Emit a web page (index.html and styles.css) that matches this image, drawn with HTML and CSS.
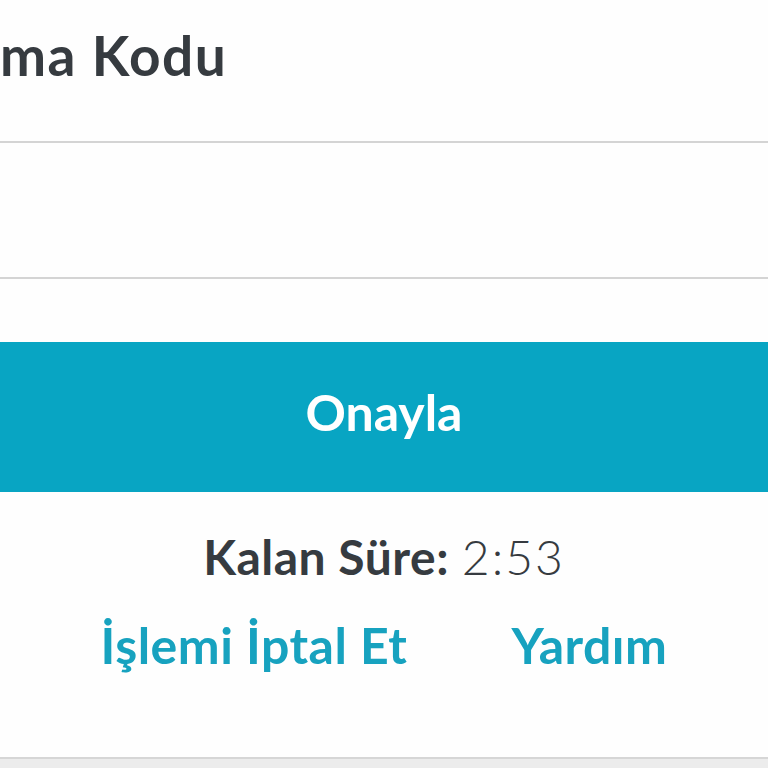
FILE: index.html
```html
<!DOCTYPE html>
<html>
<head>
  <title>Doğrulama Kodu</title>
  <link rel="stylesheet" href="styles.css">
</head>
<body>
  <div class="verify-container">
    <div class="verify-header">
      <h1 class="verify-title">ma Kodu</h1>
    </div>
    <form class="verify-form">
      <input type="text" id="code" class="verify-input" autocomplete="off">
      <button type="button" class="verify-button">Onayla</button>
    </form>
    <div class="timer">
      <span class="timer-label">Kalan Süre:</span> <span class="timer-value">2:53</span>
    </div>
    <div class="links">
      <a href="#" class="link">İşlemi İptal Et</a>
      <a href="#" class="link">Yardım</a>
    </div>
  </div>
  <div class="footer"></div>
</body>
</html>
```

FILE: styles.css
```css
/* CSS styles */
body {
  font-family: Lato, "Open Sans", sans-serif;
  background-color: #FEFEFE;
  color: #363B40;
  margin: 0;
  padding: 0;
  overflow: hidden;
}

.verify-container {
  height: 757px;
  border-bottom: 2px solid #D6D6D6;
}

.verify-header {
  height: 141px;
  border-bottom: 2px solid #D4D4D4;
  overflow: hidden;
}

.verify-title {
  margin: 0;
  padding-top: 22px;
  font-size: 55px;
  font-weight: 700;
  line-height: 66px;
  letter-spacing: 1.5px;
  white-space: nowrap;
}

.verify-form {
  margin: 0;
}

.verify-input {
  display: block;
  width: 100%;
  height: 136px;
  border: none;
  border-bottom: 2px solid #D4D4D4;
  background-color: #FEFEFE;
  box-sizing: border-box;
  outline: none;
}

.verify-button {
  display: block;
  width: 100%;
  height: 150px;
  margin-top: 63px;
  padding-bottom: 12px;
  border: none;
  background-color: #08A5C3;
  color: #FFF;
  font-family: Lato, "Open Sans", sans-serif;
  font-size: 50px;
  font-weight: 700;
  cursor: pointer;
}

.timer {
  text-align: center;
  margin-top: 30px;
  font-size: 48px;
  line-height: 70px;
  letter-spacing: 0.5px;
}

.timer-label {
  font-weight: 700;
}

.timer-value {
  font-weight: 300;
  letter-spacing: 2px;
}

.links {
  display: flex;
  justify-content: center;
  gap: 104px;
  margin-top: 18px;
}

.link {
  color: #17A2BF;
  font-size: 50px;
  font-weight: 700;
  line-height: 70px;
  letter-spacing: 0.5px;
  text-decoration: none;
}

.footer {
  height: 20px;
  background-color: #ECECEC;
}
```
